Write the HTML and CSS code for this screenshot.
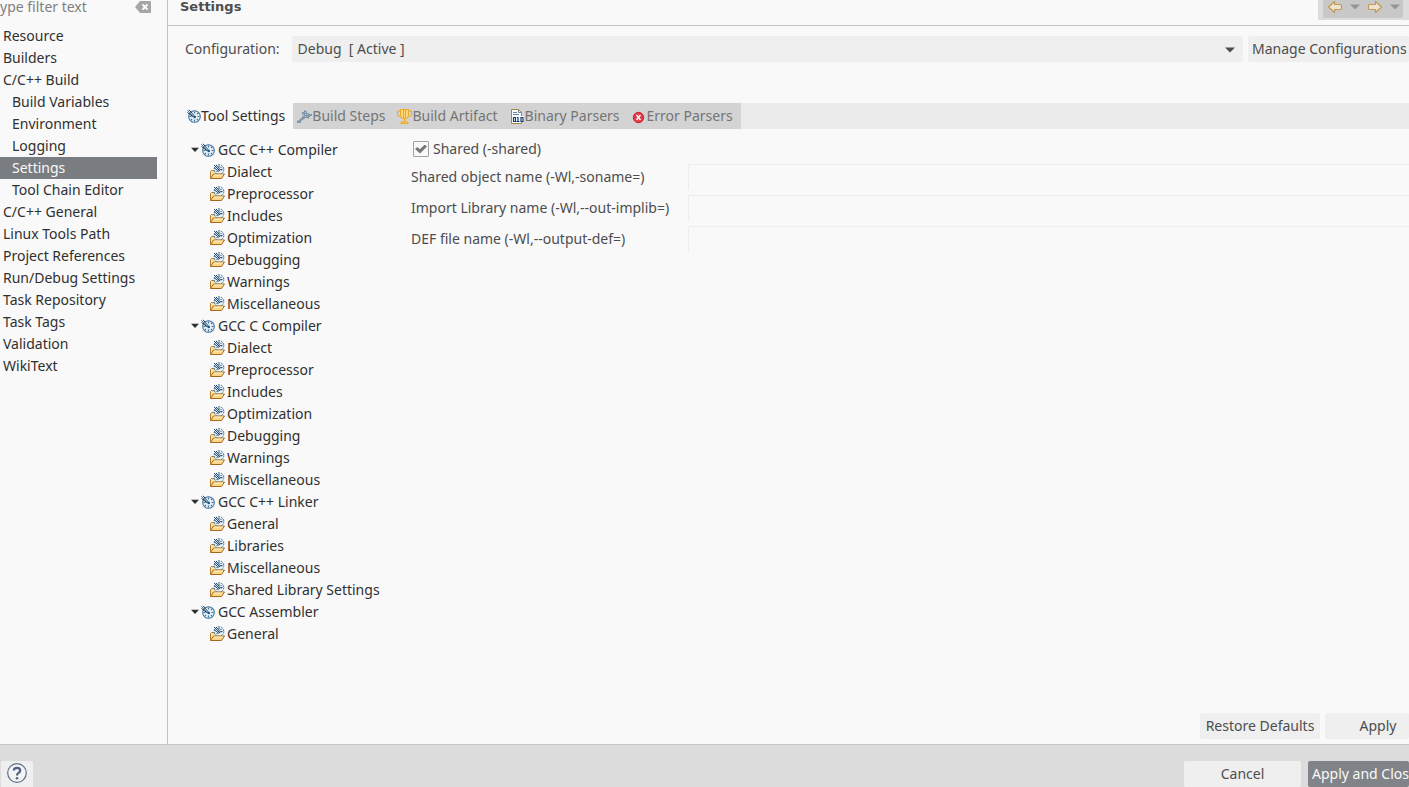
FILE: index.html
```html
<!DOCTYPE html>
<html lang="en">
<head>
  <meta charset="UTF-8" />
  <meta name="viewport" content="width=device-width, initial-scale=1.0"/>
  <title>Properties</title>
  <link rel="stylesheet" href="styles.css">
</head>
<body>
  <svg class="sprite" aria-hidden="true">
    <symbol id="tool" viewBox="0 0 14 14">
      <circle cx="7.5" cy="7.5" r="5.8" fill="#e4f0f8" stroke="#42749b" stroke-width="1.1"/>
      <path d="M7.5 2.5v2M12.5 7.5h-2M7.5 12.5v-2M2.5 7.5h2M11 4l-1 1M11 11l-1-1M4 11l1-1" stroke="#42749b" stroke-width="1.2"/>
      <path d="M.5 1.5l7 7M2 .8l6 7M.5 3.5l6 4.5" stroke="#173c5e" stroke-width="1"/>
      <path d="M1.5 2.2l6 6" stroke="#fff" stroke-width=".5"/>
      <circle cx="7.8" cy="8" r="1.2" fill="#24537a"/>
    </symbol>
    <symbol id="folder" viewBox="1 0 16 16">
      <path d="M1.5 14.5v-7l1-1h3l1 1.5h5v6" fill="#f8e3a8" stroke="#b57a2c"/>
      <circle cx="10" cy="5.5" r="4.8" fill="#e4f0f8" stroke="#42749b" stroke-dasharray="2 1"/>
      <path d="M5 1l6 6M7 1l5 5.500M5 3.500l5 4M10 1.500v2M13.500 5.500h-2M12.500 3l-1 1M7.500 8l1-1" stroke="#173c5e" stroke-width=".9"/>
      <path d="M1.5 14.5l3-4.500h11l-3 4.500z" fill="#fbd889" stroke="#a9681c"/>
      <path d="M5 11h9" stroke="#fff1c4"/>
    </symbol>
    <symbol id="down" viewBox="0 0 10 6">
      <path d="M0 .5h10L5 5.5z" fill="currentColor"/>
    </symbol>
    <symbol id="twist" viewBox="0 0 10 6">
      <path d="M1 .8h8L5 5z" fill="currentColor"/>
    </symbol>
    <symbol id="arrow" viewBox="0 0 16 14">
      <path d="M1.5 7l6-5.500v3h6q1 0 1 1v3q0 1-1 1h-6v3z" fill="#ece4d0" stroke="#c39a52" stroke-width="1.2" stroke-linejoin="round"/>
    </symbol>
  </svg>

  <div class="dialog">
    <main class="main">
      <aside class="sidebar">
        <div class="filter">
          <input type="text" class="filter-input" placeholder="ype filter text" aria-label="Filter" />
          <button type="button" class="clear" aria-label="Clear">
            <svg width="16" height="12" viewBox="0 0 16 12"><path d="M5 0h10q1 0 1 1v10q0 1-1 1H5L0 6z" fill="#a6a6a6"/><path d="M7.5 3.5l5 5M12.5 3.5l-5 5" stroke="#fff" stroke-width="1.8"/></svg>
          </button>
        </div>
        <ul class="nav">
          <li><a href="#">Resource</a></li>
          <li><a href="#">Builders</a></li>
          <li><a href="#">C/C++ Build</a></li>
          <li><a href="#" class="sub">Build Variables</a></li>
          <li><a href="#" class="sub">Environment</a></li>
          <li><a href="#" class="sub">Logging</a></li>
          <li><a href="#" class="sub selected">Settings</a></li>
          <li><a href="#" class="sub">Tool Chain Editor</a></li>
          <li><a href="#">C/C++ General</a></li>
          <li><a href="#">Linux Tools Path</a></li>
          <li><a href="#">Project References</a></li>
          <li><a href="#">Run/Debug Settings</a></li>
          <li><a href="#">Task Repository</a></li>
          <li><a href="#">Task Tags</a></li>
          <li><a href="#">Validation</a></li>
          <li><a href="#">WikiText</a></li>
        </ul>
      </aside>

      <section class="content">
        <header class="header">
          <h1>Settings</h1>
          <div class="toolbar">
            <div class="history">
              <button type="button" aria-label="Back"><svg width="16" height="14"><use href="#arrow"/></svg></button>
              <button type="button" aria-label="Back menu"><svg width="10" height="6"><use href="#down"/></svg></button>
              <button type="button" aria-label="Forward"><svg class="flip" width="16" height="14"><use href="#arrow"/></svg></button>
              <button type="button" aria-label="Forward menu"><svg width="10" height="6"><use href="#down"/></svg></button>
            </div>
          </div>
        </header>

        <div class="config">
          <label for="config">Configuration:</label>
          <div class="select-wrap">
            <select id="config">
              <option>Debug&nbsp; [ Active ]</option>
              <option>Release</option>
            </select>
            <svg class="select-arrow" width="10" height="6"><use href="#down"/></svg>
          </div>
          <button type="button" class="btn manage">Manage Configurations</button>
        </div>

        <div class="tabs" role="tablist">
          <button type="button" class="tab active" role="tab" aria-selected="true">
            <svg width="14" height="14"><use href="#tool"/></svg>Tool Settings
          </button>
          <button type="button" class="tab" role="tab">
            <svg width="15" height="15" viewBox="0 0 15 15"><path d="M0 14v-2.500h1.500L7 6l2.500 2.500L4 12v2z" fill="#8198ab"/><path d="M5 3h2V1h1v1h2v2h2v1h3v2h-2v1h-1v2h-1V9H9V8H7V6H5z" fill="#8198ab"/><path d="M6 5.500h5M8.500 3v5" stroke="#b7c4ce" stroke-dasharray="1 1"/></svg>Build Steps
          </button>
          <button type="button" class="tab" role="tab">
            <svg width="15" height="15" viewBox="0 0 15 15"><path d="M3.5 .5h8v6q0 3-2.500 3h-3Q3.5 9.500 3.5 6.500z" fill="#f9d77e" stroke="#f2a71d"/><path d="M3.5 2h-3v3q0 2.500 3 2.500M11.500 2h3v3q0 2.500-3 2.500M6.500 1v8M8.500 1v8M7.500 10v3" fill="none" stroke="#f2a71d"/><path d="M4 14.500v-1.500h7v1.500z" fill="#f9d77e" stroke="#f2a71d"/></svg>Build Artifact
          </button>
          <button type="button" class="tab" role="tab">
            <svg width="15" height="15" viewBox="0 0 15 15"><path d="M1.5 14.500V.5h7l3 3v11z" fill="#f7f9fb" stroke="#a98a3d"/><path d="M8.500.5v3h3M3 3.500h4M3 5.500h6" fill="none" stroke="#6d89a8"/><path d="M2 7h12v6H2z" fill="#fff"/><path d="M3.500 8.500h2v4h-2zM7 8.500h1v4M6.500 12.500h3M11 8.500h2v4h-2z" fill="none" stroke="#173d6b" stroke-width="1.2"/></svg>Binary Parsers
          </button>
          <button type="button" class="tab" role="tab">
            <svg width="15" height="15" viewBox="0 0 15 15"><circle cx="6.5" cy="8.500" r="5.200" fill="#e33b45" stroke="#c91f2f"/><path d="M4.500 6l4 5M8.500 6l-4 5" stroke="#fff" stroke-width="1.4"/></svg>Error Parsers
          </button>
        </div>

        <div class="panel">
          <ul class="tree">
            <li>
              <div class="row"><svg width="10" height="6"><use href="#twist"/></svg><svg width="14" height="14"><use href="#tool"/></svg><span>GCC C++ Compiler</span></div>
              <ul>
                <li class="row"><svg width="16" height="16"><use href="#folder"/></svg>Dialect</li>
                <li class="row"><svg width="16" height="16"><use href="#folder"/></svg>Preprocessor</li>
                <li class="row"><svg width="16" height="16"><use href="#folder"/></svg>Includes</li>
                <li class="row"><svg width="16" height="16"><use href="#folder"/></svg>Optimization</li>
                <li class="row"><svg width="16" height="16"><use href="#folder"/></svg>Debugging</li>
                <li class="row"><svg width="16" height="16"><use href="#folder"/></svg>Warnings</li>
                <li class="row"><svg width="16" height="16"><use href="#folder"/></svg>Miscellaneous</li>
              </ul>
            </li>
            <li>
              <div class="row"><svg width="10" height="6"><use href="#twist"/></svg><svg width="14" height="14"><use href="#tool"/></svg><span>GCC C Compiler</span></div>
              <ul>
                <li class="row"><svg width="16" height="16"><use href="#folder"/></svg>Dialect</li>
                <li class="row"><svg width="16" height="16"><use href="#folder"/></svg>Preprocessor</li>
                <li class="row"><svg width="16" height="16"><use href="#folder"/></svg>Includes</li>
                <li class="row"><svg width="16" height="16"><use href="#folder"/></svg>Optimization</li>
                <li class="row"><svg width="16" height="16"><use href="#folder"/></svg>Debugging</li>
                <li class="row"><svg width="16" height="16"><use href="#folder"/></svg>Warnings</li>
                <li class="row"><svg width="16" height="16"><use href="#folder"/></svg>Miscellaneous</li>
              </ul>
            </li>
            <li>
              <div class="row"><svg width="10" height="6"><use href="#twist"/></svg><svg width="14" height="14"><use href="#tool"/></svg><span>GCC C++ Linker</span></div>
              <ul>
                <li class="row"><svg width="16" height="16"><use href="#folder"/></svg>General</li>
                <li class="row"><svg width="16" height="16"><use href="#folder"/></svg>Libraries</li>
                <li class="row"><svg width="16" height="16"><use href="#folder"/></svg>Miscellaneous</li>
                <li class="row"><svg width="16" height="16"><use href="#folder"/></svg>Shared Library Settings</li>
              </ul>
            </li>
            <li>
              <div class="row"><svg width="10" height="6"><use href="#twist"/></svg><svg width="14" height="14"><use href="#tool"/></svg><span>GCC Assembler</span></div>
              <ul>
                <li class="row"><svg width="16" height="16"><use href="#folder"/></svg>General</li>
              </ul>
            </li>
          </ul>

          <form class="options">
            <div class="check">
              <input type="checkbox" id="shared" checked />
              <label for="shared">Shared (-shared)</label>
            </div>
            <div class="field">
              <label for="soname">Shared object name (-Wl,-soname=)</label>
              <input type="text" id="soname" />
            </div>
            <div class="field">
              <label for="implib">Import Library name (-Wl,--out-implib=)</label>
              <input type="text" id="implib" />
            </div>
            <div class="field">
              <label for="def">DEF file name (-Wl,--output-def=)</label>
              <input type="text" id="def" />
            </div>
          </form>
        </div>

        <div class="actions">
          <button type="button" class="btn restore">Restore Defaults</button>
          <button type="button" class="btn apply">Apply</button>
        </div>
      </section>
    </main>

    <footer class="footer">
      <button type="button" class="help" aria-label="Help">
        <svg width="20" height="20" viewBox="0 0 20 20"><circle cx="10" cy="10" r="9.300" fill="#f4f4f4" stroke="#5c708c" stroke-width="1.2"/><path d="M6.800 7.600Q6.800 4.800 10 4.800t3.200 2.600q0 1.500-1.600 2.500T10 12.600" fill="none" stroke="#4d6285" stroke-width="2.2"/><circle cx="10" cy="15.200" r="1.3" fill="#4d6285"/></svg>
      </button>
      <button type="button" class="btn cancel">Cancel</button>
      <button type="button" class="btn primary">Apply and Close</button>
    </footer>
  </div>
</body>
</html>
```
FILE: styles.css
```css
* {
  box-sizing: border-box;
}

body {
  margin: 0;
  background: #f9f9f9;
  color: #4d4d4d;
  font-family: "Noto Sans", sans-serif;
  font-size: 14px;
  line-height: 22px;
}

button, input, select {
  font: inherit;
  color: inherit;
  border: none;
  margin: 0;
  padding: 0;
  background: none;
}

ul {
  list-style: none;
  margin: 0;
  padding: 0;
}

svg {
  flex: none;
  display: block;
}

.sprite {
  position: absolute;
  width: 0;
  height: 0;
}

.dialog {
  display: flex;
  flex-direction: column;
  height: 100vh;
  overflow: hidden;
}

.main {
  flex: 1;
  display: flex;
  min-height: 0;
}

/* left navigation */
.sidebar {
  flex: none;
  width: 168px;
  border-right: 1px solid #c4c4c4;
  color: #303030;
}

.filter {
  display: flex;
  align-items: center;
  height: 25px;
  padding: 0 16px 11px 0;
}

.filter-input {
  flex: 1;
  min-width: 0;
  height: 22px;
}

.filter-input::placeholder {
  color: #808080;
  opacity: 1;
}

.nav a {
  display: block;
  height: 22px;
  margin-right: 10px;
  padding-left: 3px;
  color: inherit;
  text-decoration: none;
}

.nav .sub {
  padding-left: 12px;
}

.nav .selected {
  background: #797c80;
  color: #f9f9f9;
}

/* page area */
.content {
  flex: 1;
  min-width: 0;
  display: flex;
  flex-direction: column;
}

.header {
  display: flex;
  justify-content: space-between;
  height: 26px;
  padding-left: 12px;
  border-bottom: 1px solid #c4c4c4;
}

.header h1 {
  margin: 0;
  font: bold 13px/14px "DejaVu Sans", sans-serif;
}

.toolbar {
  height: 20px;
  padding: 0 6px 2px 5px;
  background: #dcdcdc;
}

.history {
  display: flex;
  align-items: center;
  height: 18px;
  padding: 0 3px 4px 4px;
  gap: 7px;
  background: #c8c8c8;
  border-radius: 0 0 2px 2px;
  color: #949494;
}

.flip {
  transform: scaleX(-1);
}

.config {
  display: flex;
  margin-top: 10px;
  padding-left: 17px;
  line-height: 26px;
}

.select-wrap {
  position: relative;
  flex: 1;
  margin: 0 5px 0 12px;
}

.select-wrap select {
  appearance: none;
  width: 100%;
  height: 26px;
  padding: 0 24px 0 6px;
  background: #efefef;
  border-radius: 2px;
}

.select-arrow {
  position: absolute;
  right: 8px;
  top: 11px;
  pointer-events: none;
}

.btn {
  height: 26px;
  padding: 0 4px;
  line-height: 26px;
  background: #efefef;
  border-radius: 2px;
  white-space: nowrap;
  overflow: hidden;
}

.manage {
  width: 161px;
  text-align: left;
}

.tabs {
  display: flex;
  height: 26px;
  margin: 41px 0 0 17px;
  background: #ebebeb;
}

.tab {
  display: flex;
  align-items: center;
  padding: 0 8px 0 4px;
  background: #d3d3d3;
  color: #757575;
  white-space: nowrap;
}

.tab.active {
  padding-left: 2px;
  background: #f9f9f9;
  color: #303030;
}

.panel {
  flex: 1;
  display: flex;
  min-height: 0;
  padding-top: 10px;
}

.tree {
  flex: none;
  width: 243px;
  padding-left: 22px;
  color: #303030;
}

.tree ul {
  padding-left: 20px;
}

.row {
  display: flex;
  align-items: center;
  height: 22px;
  gap: 1px;
  white-space: nowrap;
}

.row span {
  margin-left: 2px;
}

.options {
  flex: 1;
}

.check {
  display: flex;
  align-items: center;
  height: 20px;
  padding-left: 2px;
  gap: 4px;
}

.check input {
  appearance: none;
  width: 16px;
  height: 16px;
  border: 1px solid #a2a2a2;
  border-radius: 1px;
  display: grid;
  place-items: center;
}

.check input:checked::before {
  content: "";
  width: 12px;
  height: 9px;
  background: #777;
  clip-path: polygon(0 50%, 20% 28%, 40% 52%, 82% 0, 100% 22%, 42% 100%);
}

.field {
  display: grid;
  grid-template-columns: 277px 1fr;
  margin-top: 5px;
  line-height: 26px;
}

.field input {
  height: 26px;
  border: 1px solid #ededed;
  border-width: 1px 0 0 1px;
  border-radius: 2px 0 0 0;
}

.actions {
  display: flex;
  justify-content: flex-end;
  gap: 5px;
  padding-bottom: 5px;
}

.restore {
  width: 120px;
}

.apply {
  width: 84px;
  padding-left: 26px;
}

.footer {
  display: flex;
  height: 43px;
  padding: 16px 0 0 1px;
  background: #dcdcdc;
  border-top: 1px solid #c4c4c4;
}

.help {
  display: flex;
  justify-content: center;
  width: 32px;
  height: 28px;
  padding-top: 2px;
  background: #efefef;
  border-radius: 2px;
}

.cancel {
  width: 117px;
  margin: 0 7px 0 auto;
}

.primary {
  width: 101px;
  text-align: left;
  background: #808387;
  color: #f9f9f9;
}
```
